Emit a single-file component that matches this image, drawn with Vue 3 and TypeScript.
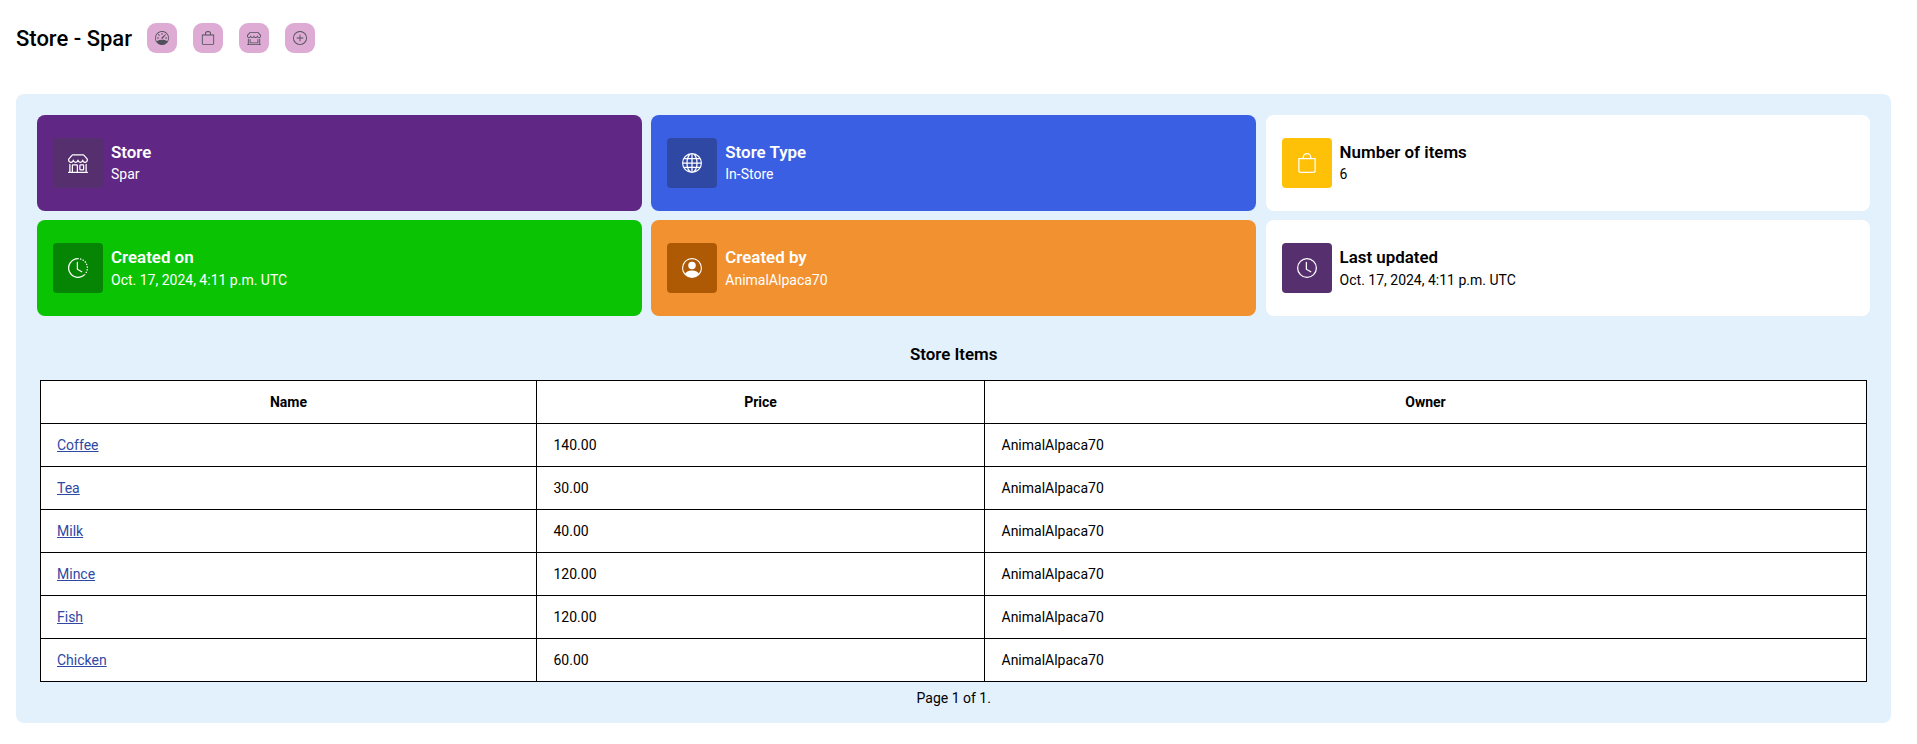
<script setup lang="ts">
interface Action { label: string; icon: string }
interface Card { title: string; value: string; icon: string; tone: string }
interface Item { name: string; price: string; owner: string }

const awning =
  'M2.97 1.35A1 1 0 0 1 3.73 1h8.54a1 1 0 0 1 .76.35l2.609 3.044A1.5 1.5 0 0 1 16 5.37v.255a2.375 2.375 0 0 1-4.25 1.458A2.37 2.37 0 0 1 9.875 8 2.37 2.37 0 0 1 8 7.083 2.37 2.37 0 0 1 6.125 8a2.37 2.37 0 0 1-1.875-.917A2.375 2.375 0 0 1 0 5.625V5.37a1.5 1.5 0 0 1 .361-.976zm1.78 4.275a1.375 1.375 0 0 0 2.75 0 .5.5 0 0 1 1 0 1.375 1.375 0 0 0 2.75 0 .5.5 0 0 1 1 0 1.375 1.375 0 1 0 2.75 0V5.37a.5.5 0 0 0-.12-.325L12.27 2H3.73L1.12 5.045A.5.5 0 0 0 1 5.37v.255a1.375 1.375 0 0 0 2.75 0 .5.5 0 0 1 1 0'

const icons: Record<string, string[]> = {
  gauge: [
    'M8 2a.5.5 0 0 1 .5.5V4a.5.5 0 0 1-1 0V2.5A.5.5 0 0 1 8 2M3.732 3.732a.5.5 0 0 1 .707 0l.915.914a.5.5 0 1 1-.708.708l-.914-.915a.5.5 0 0 1 0-.707M2 8a.5.5 0 0 1 .5-.5h1.586a.5.5 0 0 1 0 1H2.5A.5.5 0 0 1 2 8m9.5 0a.5.5 0 0 1 .5-.5h1.5a.5.5 0 0 1 0 1H12a.5.5 0 0 1-.5-.5m.754-4.246a.39.39 0 0 0-.527-.02L7.547 7.31A.91.91 0 1 0 8.85 8.569l3.434-4.297a.39.39 0 0 0-.029-.518z',
    'M6.664 15.889A8 8 0 1 1 9.336.11a8 8 0 0 1-2.672 15.78zm-4.665-4.283A11.95 11.95 0 0 1 8 10c2.186 0 4.236.585 6.001 1.606a7 7 0 1 0-12.002 0',
  ],
  bag: [
    'M8 1a2.5 2.5 0 0 1 2.5 2.5V4h-5v-.5A2.5 2.5 0 0 1 8 1m3.5 3v-.5a3.5 3.5 0 1 0-7 0V4H1v10a2 2 0 0 0 2 2h10a2 2 0 0 0 2-2V4zM2 5h12v9a1 1 0 0 1-1 1H3a1 1 0 0 1-1-1z',
  ],
  shopWindow: [
    awning,
    'M1.5 8.5A.5.5 0 0 1 2 9v6h12V9a.5.5 0 0 1 1 0v6h.5a.5.5 0 0 1 0 1H.5a.5.5 0 0 1 0-1H1V9a.5.5 0 0 1 .5-.5m2 .5a.5.5 0 0 1 .5.5V13h8V9.5a.5.5 0 0 1 1 0V13a1 1 0 0 1-1 1H4a1 1 0 0 1-1-1V9.5a.5.5 0 0 1 .5-.5',
  ],
  plus: [
    'M8 15A7 7 0 1 1 8 1a7 7 0 0 1 0 14m0 1A8 8 0 1 0 8 0a8 8 0 0 0 0 16',
    'M8 4a.5.5 0 0 1 .5.5v3h3a.5.5 0 0 1 0 1h-3v3a.5.5 0 0 1-1 0v-3h-3a.5.5 0 0 1 0-1h3v-3A.5.5 0 0 1 8 4',
  ],
  shop: [
    awning,
    'M1.5 8.5A.5.5 0 0 1 2 9v6h1v-5a1 1 0 0 1 1-1h3a1 1 0 0 1 1 1v5h6V9a.5.5 0 0 1 1 0v6h.5a.5.5 0 0 1 0 1H.5a.5.5 0 0 1 0-1H1V9a.5.5 0 0 1 .5-.5M4 15h3v-5H4zm5-5a1 1 0 0 1 1-1h2a1 1 0 0 1 1 1v3a1 1 0 0 1-1 1h-2a1 1 0 0 1-1-1zm3 0h-2v3h2z',
  ],
  globe: [
    'M0 8a8 8 0 1 1 16 0A8 8 0 0 1 0 8m7.5-6.923c-.67.204-1.335.82-1.887 1.855A8 8 0 0 0 5.145 4H7.5zM4.09 4a9.3 9.3 0 0 1 .64-1.539 7 7 0 0 1 .597-.933A7.03 7.03 0 0 0 2.255 4zm-.582 3.5c.03-.877.138-1.718.312-2.5H1.674a7 7 0 0 0-.656 2.5zM4.847 5a12.5 12.5 0 0 0-.338 2.5H7.5V5zM8.5 5v2.5h2.99a12.5 12.5 0 0 0-.337-2.5zM4.51 8.5a12.5 12.5 0 0 0 .337 2.5H7.5V8.5zm3.99 0V11h2.653c.187-.765.306-1.608.338-2.5zM5.145 12q.208.58.468 1.068c.552 1.035 1.218 1.65 1.887 1.855V12zm.182 2.472a7 7 0 0 1-.597-.933A9.3 9.3 0 0 1 4.09 12H2.255a7 7 0 0 0 3.072 2.472M3.82 11a13.7 13.7 0 0 1-.312-2.5h-2.49c.062.89.291 1.733.656 2.5zm6.853 3.472A7 7 0 0 0 13.745 12H11.91a9.3 9.3 0 0 1-.64 1.539 7 7 0 0 1-.597.933M8.5 12v2.923c.67-.204 1.335-.82 1.887-1.855q.26-.487.468-1.068zm3.68-1h2.146c.365-.767.594-1.61.656-2.5h-2.49a13.7 13.7 0 0 1-.312 2.5m2.802-3.5a7 7 0 0 0-.656-2.5H12.18c.174.782.282 1.623.312 2.5zM11.27 2.461c.247.464.462.98.64 1.539h1.835a7 7 0 0 0-3.072-2.472c.218.284.418.598.597.933M10.855 4a8 8 0 0 0-.468-1.068C9.835 1.897 9.17 1.282 8.5 1.077V4z',
  ],
  history: [
    'M8.515 1.019A7 7 0 0 0 8 1V0a8 8 0 0 1 .589.022zm2.004.45a7 7 0 0 0-.985-.299l.219-.976q.576.129 1.126.342zm1.37.71a7 7 0 0 0-.439-.27l.493-.87a8 8 0 0 1 .979.654l-.615.789a7 7 0 0 0-.418-.302zm1.834 1.79a7 7 0 0 0-.653-.796l.724-.69q.406.429.747.91zm.744 1.352a7 7 0 0 0-.214-.468l.893-.45a8 8 0 0 1 .45 1.088l-.95.313a7 7 0 0 0-.179-.483m.53 2.507a7 7 0 0 0-.1-1.025l.985-.17q.1.58.116 1.17zm-.131 1.538q.05-.254.081-.51l.993.123a8 8 0 0 1-.23 1.155l-.964-.267q.069-.247.12-.501m-.952 2.379q.276-.436.486-.908l.914.405q-.24.54-.555 1.038zm-.964 1.205q.183-.183.35-.378l.758.653a8 8 0 0 1-.401.432z',
    'M8 1a7 7 0 1 0 4.95 11.95l.707.707A8.001 8.001 0 1 1 8 0z',
    'M7.5 3a.5.5 0 0 1 .5.5v5.21l3.248 1.856a.5.5 0 0 1-.496.868l-3.5-2A.5.5 0 0 1 7 9V3.5a.5.5 0 0 1 .5-.5',
  ],
  person: [
    'M11 6a3 3 0 1 1-6 0 3 3 0 0 1 6 0',
    'M0 8a8 8 0 1 1 16 0A8 8 0 0 1 0 8m8-7a7 7 0 0 0-5.468 11.37C3.242 11.226 4.805 10 8 10s4.757 1.225 5.468 2.37A7 7 0 0 0 8 1',
  ],
  clock: [
    'M8 3.5a.5.5 0 0 0-1 0V9a.5.5 0 0 0 .252.434l3.5 2a.5.5 0 0 0 .496-.868L8 8.71z',
    'M8 16A8 8 0 1 0 8 0a8 8 0 0 0 0 16m7-8A7 7 0 1 1 1 8a7 7 0 0 1 14 0',
  ],
}

const actions: Action[] = [
  { label: 'Dashboard', icon: 'gauge' },
  { label: 'Items', icon: 'bag' },
  { label: 'Stores', icon: 'shopWindow' },
  { label: 'Add', icon: 'plus' },
]

const cards: Card[] = [
  { title: 'Store', value: 'Spar', icon: 'shop', tone: 'purple' },
  { title: 'Store Type', value: 'In-Store', icon: 'globe', tone: 'blue' },
  { title: 'Number of items', value: '6', icon: 'bag', tone: 'yellow' },
  { title: 'Created on', value: 'Oct. 17, 2024, 4:11 p.m. UTC', icon: 'history', tone: 'green' },
  { title: 'Created by', value: 'AnimalAlpaca70', icon: 'person', tone: 'orange' },
  { title: 'Last updated', value: 'Oct. 17, 2024, 4:11 p.m. UTC', icon: 'clock', tone: 'plain' },
]

const items: Item[] = [
  { name: 'Coffee', price: '140.00', owner: 'AnimalAlpaca70' },
  { name: 'Tea', price: '30.00', owner: 'AnimalAlpaca70' },
  { name: 'Milk', price: '40.00', owner: 'AnimalAlpaca70' },
  { name: 'Mince', price: '120.00', owner: 'AnimalAlpaca70' },
  { name: 'Fish', price: '120.00', owner: 'AnimalAlpaca70' },
  { name: 'Chicken', price: '60.00', owner: 'AnimalAlpaca70' },
]
</script>

<template>
  <div class="page">
    <header class="header">
      <h1>Store - Spar</h1>
      <nav class="actions">
        <a v-for="a in actions" :key="a.icon" class="action" href="#" :aria-label="a.label">
          <svg viewBox="0 0 16 16" fill="currentColor" fill-rule="evenodd">
            <path v-for="d in icons[a.icon]" :key="d" :d="d" />
          </svg>
        </a>
      </nav>
    </header>

    <main class="panel">
      <section class="cards">
        <article v-for="c in cards" :key="c.title" class="card" :class="c.tone">
          <div class="badge">
            <svg viewBox="0 0 16 16" fill="currentColor">
              <path v-for="d in icons[c.icon]" :key="d" :d="d" />
            </svg>
          </div>
          <div class="info">
            <h3>{{ c.title }}</h3>
            <p>{{ c.value }}</p>
          </div>
        </article>
      </section>

      <h2>Store Items</h2>
      <table>
        <colgroup>
          <col class="col-name" />
          <col class="col-price" />
          <col />
        </colgroup>
        <thead>
          <tr><th>Name</th><th>Price</th><th>Owner</th></tr>
        </thead>
        <tbody>
          <tr v-for="i in items" :key="i.name">
            <td><a href="#">{{ i.name }}</a></td>
            <td>{{ i.price }}</td>
            <td>{{ i.owner }}</td>
          </tr>
        </tbody>
      </table>
      <p class="pages">Page 1 of 1.</p>
    </main>
  </div>
</template>

<style>
body {
  margin: 0;
  background: #fff;
}
</style>

<style scoped>
.page {
  box-sizing: border-box;
  padding: 23px 26px 0 16px;
  font-family: Roboto, sans-serif;
  font-size: 14px;
  color: #000;
}
h1, h2, h3, p {
  margin: 0;
}
.header {
  display: flex;
  align-items: center;
  height: 30px;
  margin-bottom: 41px;
}
h1 {
  width: 131px;
  padding-top: 2px;
  font-size: 22px;
  font-weight: 500;
  line-height: 30px;
  white-space: nowrap;
}
.actions {
  display: flex;
  gap: 16px;
}
.action {
  display: flex;
  align-items: center;
  justify-content: center;
  width: 30px;
  height: 30px;
  border-radius: 9px;
  background: #ddabd4;
  color: #50505a;
}
.action svg {
  width: 14px;
  height: 14px;
}
.panel {
  box-sizing: border-box;
  height: 629px;
  padding: 21px 20.6px 21px 21px;
  border-radius: 8px;
  background: #e3f1fd;
}
.cards {
  display: grid;
  grid-template-columns: repeat(3, 1fr);
  gap: 9.4px 9.5px;
}
.card {
  display: flex;
  align-items: center;
  gap: 8px;
  box-sizing: border-box;
  height: 96px;
  padding: 0 16px;
  border-radius: 8px;
  background: #fff;
}
.badge {
  display: flex;
  align-items: center;
  justify-content: center;
  width: 50px;
  height: 50px;
  border-radius: 4px;
  color: #fff;
}
.badge svg {
  width: 20px;
  height: 20px;
}
.info {
  padding-top: 1.2px;
}
h3 {
  font-size: 16.9px;
  font-weight: 600;
  line-height: 21.7px;
}
.info p {
  line-height: 22px;
}
.purple, .blue, .green, .orange { color: #fff; }
.purple { background: #602784; }
.purple .badge { background: #562f6e; }
.blue { background: #3a5fe3; }
.blue .badge { background: #2f48a4; }
.yellow .badge { background: #ffc107; }
.green { background: #0ac404; }
.green .badge { background: #068403; }
.orange { background: #f29130; }
.orange .badge { background: #ae5904; }
.plain .badge { background: #562f6e; }
h2 {
  margin: 26.6px 0 15px;
  font-size: 16.9px;
  font-weight: 600;
  line-height: 22px;
  text-align: center;
}
table {
  width: 1827px;
  margin: 0 3px;
  border-collapse: collapse;
  table-layout: fixed;
  background: #fff;
}
.col-name { width: 496px; }
.col-price { width: 448px; }
th, td {
  box-sizing: border-box;
  height: 43px;
  padding: 0 15.5px 0 16.5px;
  border: 1px solid #000;
  text-align: left;
}
td:first-child {
  padding-left: 16px;
}
th {
  padding: 0 16px;
  font-weight: 700;
  text-align: center;
}
td a {
  color: #2f48a4;
  text-decoration: underline;
}
.pages {
  margin-top: 5px;
  line-height: 22px;
  text-align: center;
}
</style>
